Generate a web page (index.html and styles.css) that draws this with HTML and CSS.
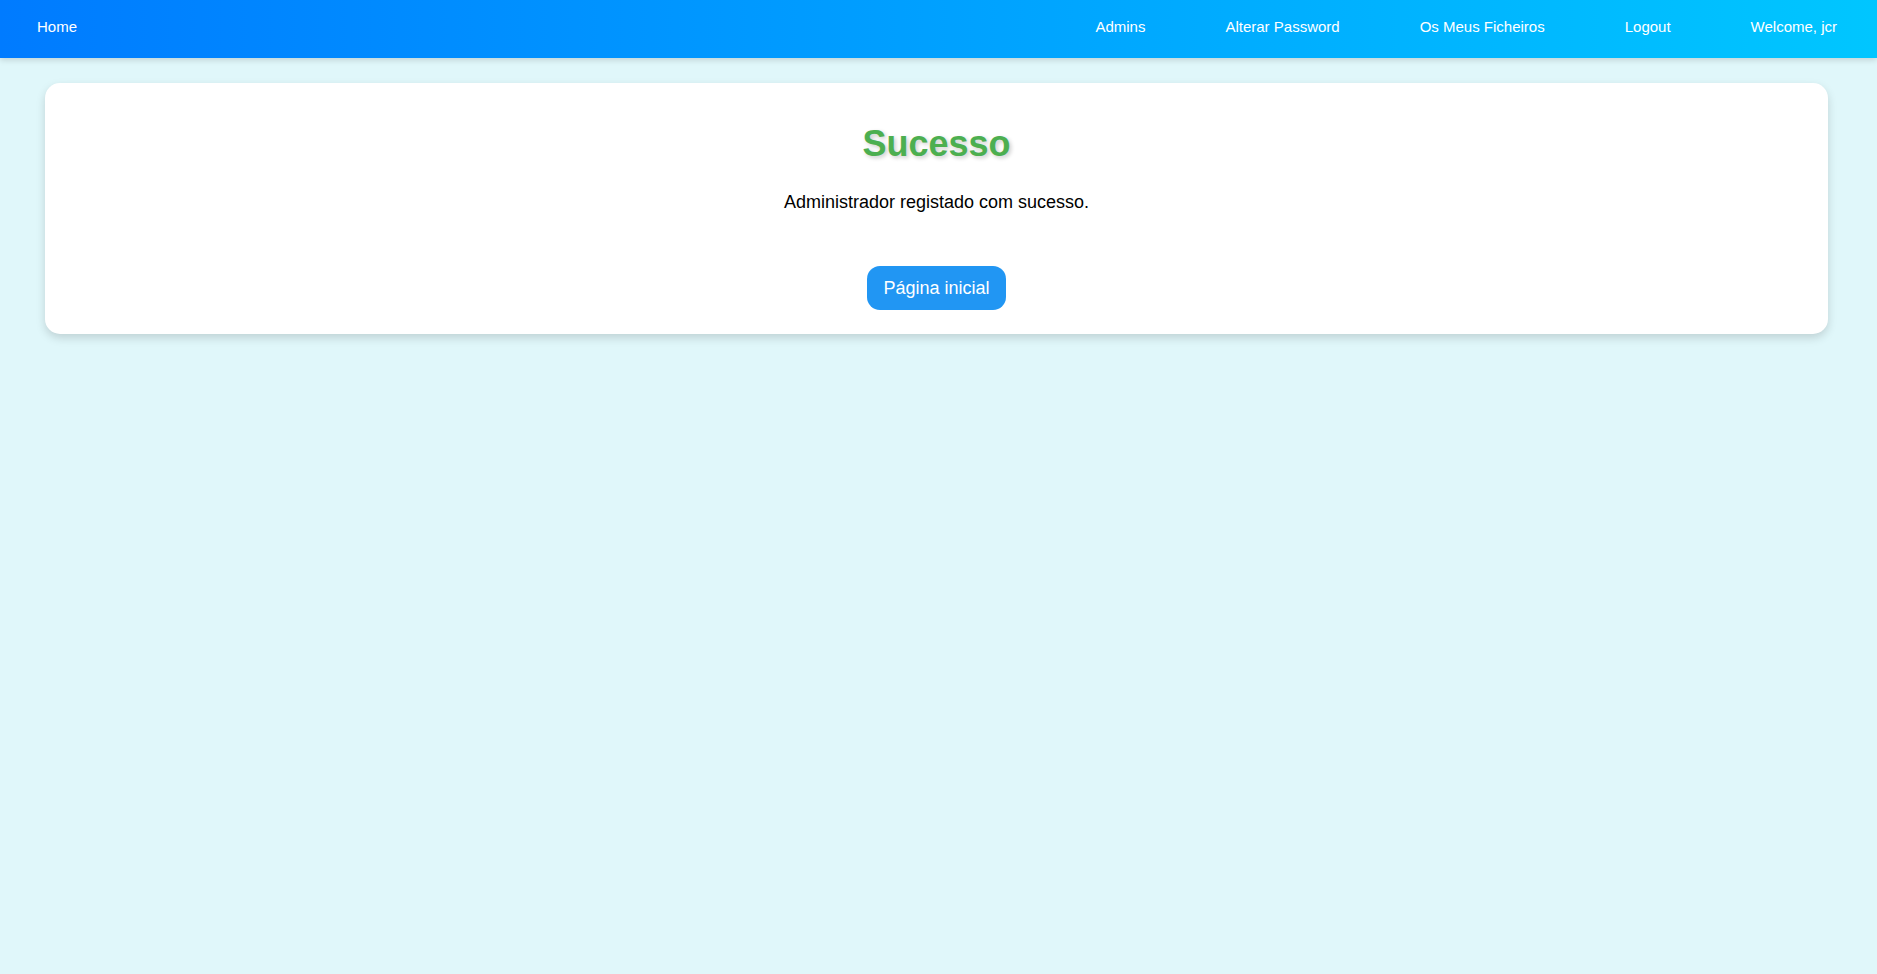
FILE: index.html
```
<!DOCTYPE html>
<html lang="pt">
<head>
<meta charset="utf-8">
<title>Sucesso</title>
<link rel="stylesheet" href="styles.css">
</head>
<body>
<nav class="navbar">
  <a class="nav-link" href="#">Home</a>
  <div class="nav-right">
    <a class="nav-link" href="#">Admins</a>
    <a class="nav-link" href="#">Alterar Password</a>
    <a class="nav-link" href="#">Os Meus Ficheiros</a>
    <a class="nav-link" href="#">Logout</a>
    <span class="nav-link">Welcome, jcr</span>
  </div>
</nav>
<main class="card">
  <h1 class="title">Sucesso</h1>
  <p class="message">Administrador registado com sucesso.</p>
  <a class="btn" href="#">Página inicial</a>
</main>
</body>
</html>
```
FILE: styles.css
```
html, body {
  margin: 0;
  padding: 0;
}
body {
  background: #e0f7fa;
  font-family: "Liberation Sans", Arial, sans-serif;
  min-height: 974px;
}
.navbar {
  height: 58px;
  box-sizing: border-box;
  background: linear-gradient(90deg, #007bff, #00c6ff);
  display: flex;
  justify-content: space-between;
  align-items: flex-start;
  padding: 18px 40px 0 37px;
  box-shadow: 0 2px 6px rgba(0, 0, 0, 0.15);
}
.nav-right {
  display: flex;
  gap: 80px;
}
.nav-link {
  color: #ffffff;
  text-decoration: none;
  font-size: 15px;
  line-height: 17px;
}
.card {
  margin: 25px 49px 0 45px;
  background: #ffffff;
  border-radius: 15px;
  box-shadow: 0 4px 10px rgba(0, 0, 0, 0.15);
  box-sizing: border-box;
  padding: 20px 20px 24px;
  display: flex;
  flex-direction: column;
  align-items: center;
}
.title {
  margin: 20px 0 0;
  color: #4caf50;
  font-size: 36px;
  line-height: 42px;
  font-weight: bold;
  text-shadow: 2px 2px 4px rgba(0, 0, 0, 0.2);
}
.message {
  margin: 27px 0 0;
  font-size: 18px;
  line-height: 21px;
  color: #000;
}
.btn {
  margin-top: 53px;
  background: #2196f3;
  color: #ffffff;
  text-decoration: none;
  font-size: 18px;
  line-height: 20px;
  padding: 12px 16px;
  border-radius: 13px;
}
```
